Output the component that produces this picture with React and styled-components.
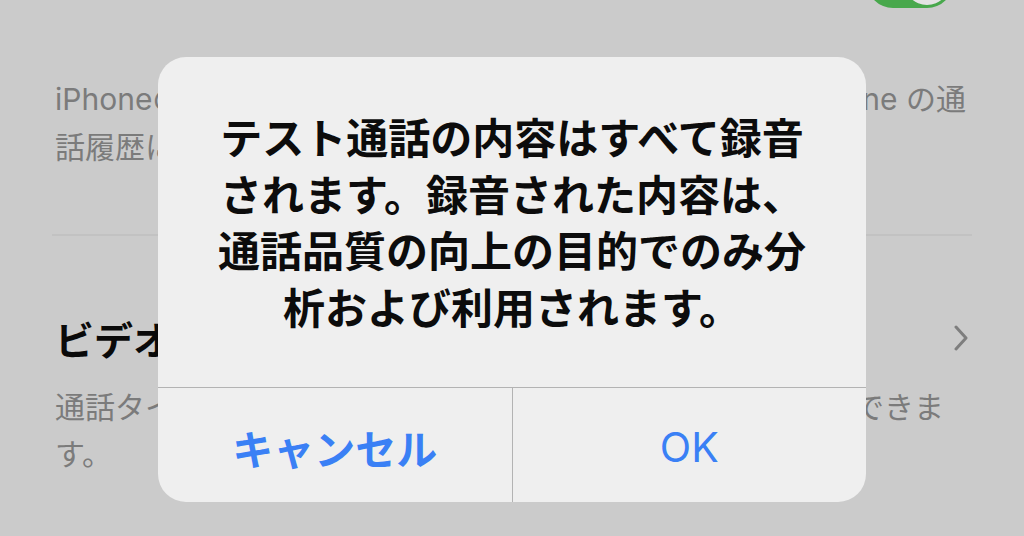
import React from "react";
import styled, { createGlobalStyle } from "styled-components";

const Global = createGlobalStyle`
  html, body { margin: 0; padding: 0; background: #cbcbcb; }
  body { font-family: "Inter", "Noto Sans CJK JP", sans-serif; }
`;

const Screen = styled.div`
  position: relative;
  width: 1024px;
  height: 536px;
  overflow: hidden;
  background: #cbcbcb;
  font-family: "Inter", "Noto Sans CJK JP", sans-serif;
`;

const Section = styled.div`
  display: flex;
  flex-direction: column;
  padding: 0 52px;
`;

const ToggleRow = styled.div`
  display: flex;
  justify-content: flex-end;
  margin-top: -44px;
  padding-right: 19px;
`;

const Toggle = styled.div`
  width: 86px;
  height: 52px;
  border-radius: 26px;
  background: #48a84c;
  display: flex;
  align-items: center;
  justify-content: flex-end;
  padding: 0 3px;
  box-sizing: border-box;
`;

const Knob = styled.div`
  width: 46px;
  height: 46px;
  border-radius: 50%;
  background: #e3e3e3;
`;

const Footnote = styled.div`
  display: flex;
  flex-direction: column;
  margin-top: ${(p) => p.$top}px;
  padding: 0 ${(p) => p.$right}px 0 3px;
  font-size: 30px;
  line-height: ${(p) => p.$lh}px;
  color: #7b7b7b;
`;

const FootLine = styled.div`
  display: flex;
  justify-content: space-between;
  white-space: nowrap;
`;

const Divider = styled.div`
  height: 2px;
  background: #c2c2c2;
  margin-top: 63px;
`;

const NavRow = styled.div`
  display: flex;
  align-items: center;
  justify-content: space-between;
  margin-top: 80px;
  padding: 0 4px 0 3px;
`;

const NavTitle = styled.div`
  font-family: "Noto Sans CJK JP", sans-serif;
  font-size: 39px;
  line-height: 44px;
  font-weight: 700;
  color: #0a0a0a;
`;

const Chevron = styled.svg`
  width: 14px;
  height: 26px;
`;

const Dialog = styled.div`
  position: absolute;
  left: 158px;
  top: 57px;
  width: 708px;
  height: 445px;
  border-radius: 28px;
  background: #efefef;
  display: flex;
  flex-direction: column;
  overflow: hidden;
`;

const Message = styled.div`
  height: 330px;
  display: flex;
  flex-direction: column;
  align-items: center;
  justify-content: center;
  padding-bottom: 2px;
  box-sizing: border-box;
  font-family: "Noto Sans CJK JP", sans-serif;
  font-size: 42px;
  line-height: 56.5px;
  font-weight: 700;
  color: #0c0c0c;
  text-align: center;
`;

const MsgLine = styled.div`
  white-space: nowrap;
`;

const Buttons = styled.div`
  flex: 1;
  display: grid;
  grid-template-columns: 1fr 1px 1fr;
  border-top: 1px solid #b3b3b3;
`;

const VSep = styled.div`
  background: #b3b3b3;
`;

const Button = styled.div`
  display: flex;
  align-items: center;
  justify-content: center;
  padding-top: 3px;
  font-size: 41px;
  font-weight: ${(p) => (p.$bold ? 700 : 400)};
  color: #3a80f5;
  font-family: ${(p) =>
    p.$latin ? `"Inter", "Noto Sans CJK JP", sans-serif` : `"Noto Sans CJK JP", sans-serif`};
`;

export default function App() {
  return (
    <Screen>
      <Global />
      <Section>
        <ToggleRow>
          <Toggle>
            <Knob />
          </Toggle>
        </ToggleRow>
        <Footnote $top={67} $lh={48} $right={6}>
          <FootLine>
            <span>iPhoneの</span>
            <span>iPhone の通</span>
          </FootLine>
          <FootLine>
            <span>話履歴に</span>
          </FootLine>
        </Footnote>
        <Divider />
        <NavRow>
          <NavTitle>ビデオ通話</NavTitle>
          <Chevron viewBox="0 0 14 26">
            <path
              d="M2 2 L12 13 L2 24"
              fill="none"
              stroke="#7e7e7e"
              strokeWidth="3"
              strokeLinecap="round"
              strokeLinejoin="round"
            />
          </Chevron>
        </NavRow>
        <Footnote $top={24} $lh={47} $right={28}>
          <FootLine>
            <span>通話タイプ</span>
            <span>できま</span>
          </FootLine>
          <FootLine>
            <span>す。</span>
          </FootLine>
        </Footnote>
      </Section>

      <Dialog role="alertdialog">
        <Message>
          <MsgLine>テスト通話の内容はすべて録音</MsgLine>
          <MsgLine>されます。録音された内容は、</MsgLine>
          <MsgLine>通話品質の向上の目的でのみ分</MsgLine>
          <MsgLine>析および利用されます。</MsgLine>
        </Message>
        <Buttons>
          <Button $bold>キャンセル</Button>
          <VSep />
          <Button $latin>OK</Button>
        </Buttons>
      </Dialog>
    </Screen>
  );
}
